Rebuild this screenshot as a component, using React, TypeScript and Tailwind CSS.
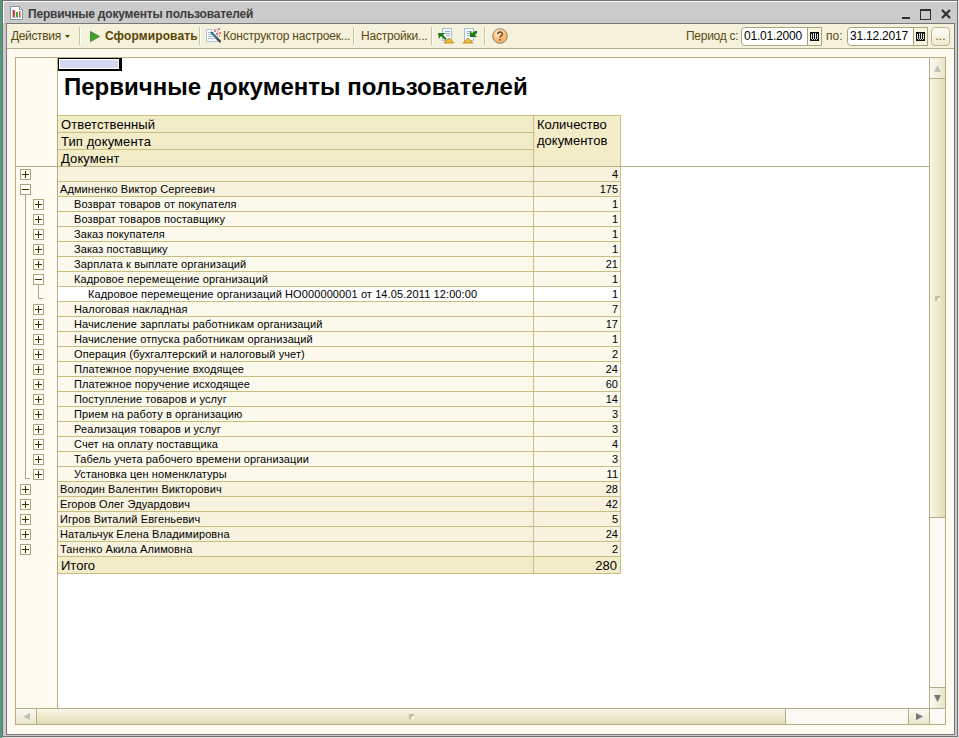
import type { ReactNode } from "react";

type Row = { text: string; count: number; level: 0 | 1 | 2; open?: boolean; track?: string };

const rows: Row[] = [
  { text: "", count: 4, level: 0 },
  { text: "Админенко Виктор Сергеевич", count: 175, level: 0, open: true },
  { text: "Возврат товаров от покупателя", count: 1, level: 1 },
  { text: "Возврат товаров поставщику", count: 1, level: 1 },
  { text: "Заказ покупателя", count: 1, level: 1 },
  { text: "Заказ поставщику", count: 1, level: 1 },
  { text: "Зарплата к выплате организаций", count: 21, level: 1 },
  { text: "Кадровое перемещение организаций", count: 1, level: 1, open: true },
  { text: "Кадровое перемещение организаций НО000000001 от 14.05.2011 12:00:00", count: 1, level: 2 },
  { text: "Налоговая накладная", count: 7, level: 1 },
  { text: "Начисление зарплаты работникам организаций", count: 17, level: 1 },
  { text: "Начисление отпуска работникам организаций", count: 1, level: 1 },
  { text: "Операция (бухгалтерский и налоговый учет)", count: 2, level: 1 },
  { text: "Платежное поручение входящее", count: 24, level: 1 },
  { text: "Платежное поручение исходящее", count: 60, level: 1 },
  { text: "Поступление товаров и услуг", count: 14, level: 1 },
  { text: "Прием на работу в организацию", count: 3, level: 1 },
  { text: "Реализация товаров и услуг", count: 3, level: 1 },
  { text: "Счет на оплату поставщика", count: 4, level: 1 },
  { text: "Табель учета рабочего времени организации", count: 3, level: 1 },
  { text: "Установка цен номенклатуры", count: 11, level: 1 },
  { text: "Володин Валентин Викторович", count: 28, level: 0 },
  { text: "Егоров Олег Эдуардович", count: 42, level: 0 },
  { text: "Игров Виталий Евгеньевич", count: 5, level: 0 },
  { text: "Натальчук Елена Владимировна", count: 24, level: 0 },
  { text: "Таненко Акила Алимовна", count: 2, level: 0 },
];

const rowBg = ["bg-[#f7f2dd]", "bg-[#fbf9ec]", "bg-white"];
const rowPad = ["pl-[2px]", "pl-4", "pl-[30px]"];

function Toggle({ open }: { open?: boolean }) {
  return (
    <svg width="11" height="11" className="block shrink-0" shapeRendering="crispEdges">
      <rect x="0.5" y="0.5" width="10" height="10" fill="#fffdf6" stroke="#aca67f" />
      <path d="M2 5.5h7" stroke="#3c3000" />
      {!open && <path d="M5.5 2v7" stroke="#3c3000" />}
    </svg>
  );
}

function GutterRow({ row, index }: { row: Row; index: number }) {
  const inGroup = index >= 2 && index <= 20;
  const last = index === 20;
  return (
    <div className="flex h-[15px]">
      <div className="flex w-[17px] pl-1 pt-[2px]">
        {row.level === 0 && (
          <div className="flex flex-col items-center">
            <Toggle open={row.open} />
            {row.open && <div className="h-[2px] w-px bg-[#aca67f]" />}
          </div>
        )}
        {inGroup && (
          <div className={`-mt-[2px] ml-[5px] w-[5px] border-l border-[#aca67f] ${last ? "h-[12px] border-b" : "h-[15px]"}`} />
        )}
      </div>
      <div className="flex w-[24px] pt-[2px]">
        {row.level === 1 && (
          <div className="flex flex-col items-center">
            <Toggle open={row.open} />
            {row.open && <div className="h-[2px] w-px bg-[#aca67f]" />}
          </div>
        )}
        {row.level === 2 && <div className="-mt-[2px] ml-[5px] h-[12px] w-[5px] border-b border-l border-[#aca67f]" />}
      </div>
    </div>
  );
}

function Sep() {
  return <div className="h-[18px] w-[2px] shrink-0 border-l border-[#c9c4a0] bg-white" />;
}

function Calendar() {
  return (
    <svg width="9" height="9" shapeRendering="crispEdges">
      <rect width="9" height="9" fill="#111" />
      <path d="M1 2.5h7M1 4.5h7M1 6.5h7" stroke="#fff" strokeDasharray="1 1" />
      <path d="M3 1.5h3M1 3.5h7M1 5.5h7M2 7.5h6" stroke="#fff" strokeDasharray="1 1" strokeOpacity="0.75" />
    </svg>
  );
}

function DateField({ children }: { children: ReactNode }) {
  return (
    <div className="flex h-[19px] w-[81px] shrink-0 rounded-l-[4px] border border-[#aca57c] bg-white text-black">
      <div className="flex w-[65px] items-center pl-[2px] text-[12px] tracking-[-0.22px]">{children}</div>
      <div className="flex flex-1 items-center justify-center border-l border-[#aca57c] bg-[#f8f5e4]">
        <Calendar />
      </div>
    </div>
  );
}

function PageIcon({ restore }: { restore?: boolean }) {
  return (
    <svg width="16" height="16" viewBox="0 0 16 16">
      <rect x={restore ? 2.5 : 4.5} y="0.5" width="9" height="12" fill="#f5faff" stroke="#a9bdcd" />
      <path d={restore ? "M5 3.5h5M5 5.5h5M5 7.5h4" : "M7 3.5h5M7 5.5h5M8 7.5h4"} stroke="#9bb0c0" />
      {restore ? (
        <path d="M15 3v2L13 7l2 2H8V3l2 2 3-2z" fill="#237a17" />
      ) : (
        <path d="M0 5h7L5 7l4 4-2 1-4-4-2 3z" fill="#237a17" />
      )}
      <path d={restore ? "M1 15l5-5 5 5z" : "M6 15l5-5 5 5z"} fill="#f2bd35" stroke="#b98516" strokeWidth="0.8" />
    </svg>
  );
}

function Grip() {
  return (
    <svg width="5" height="5" shapeRendering="crispEdges">
      <path d="M0 0h5v2H3v1H2v2H0z" fill="#c5c0a0" />
      <path d="M5 2v3H3V3h1V2z" fill="#fcfaec" />
    </svg>
  );
}

function Header() {
  return (
    <div className="flex h-[51px] w-[563px] border-t border-r border-[#c9bd80] bg-[#f3ecc8] text-[13px] text-black">
      <div className="w-[475px]">
        <div className="h-[17px] border-b border-[#c9bd80] pl-[3px] leading-[17px] tracking-[0.1px]">Ответственный</div>
        <div className="h-[17px] border-b border-[#c9bd80] pl-[3px] leading-[17px] tracking-[0.1px]">Тип документа</div>
        <div className="h-[16px] pl-[3px] leading-[17px] tracking-[0.1px]">Документ</div>
      </div>
      <div className="flex-1 border-l border-[#c9bd80] pl-[3px] pt-px leading-4">
        Количество
        <br />
        документов
      </div>
    </div>
  );
}

export default function App() {
  return (
    <div className="flex h-[738px] w-[959px] overflow-hidden bg-[#e9e7e2] font-['Liberation_Sans',Arial,sans-serif]">
      <div className="w-[2px] bg-[#4f9a78]" />
      <div className="flex h-[737px] w-[956px] flex-col border border-[#726f74] bg-[#cbcbcb]">
        <div className="flex h-[22px] shrink-0 items-center border-l border-t border-white bg-[#cbcbcb] pl-[6px] pr-[5px]">
          <svg width="13" height="14" viewBox="0 0 13 14" className="mt-px">
            <path d="M.5.5h9l3 3v10H.5z" fill="#fff" stroke="#8196a3" />
            <path d="M9.5.5v3h3" fill="#d5e2ea" stroke="#8196a3" />
            <path d="M2.5 3v8.5H11" stroke="#b5c5cf" fill="none" />
            <path d="M3 4h2v7H3z" fill="#e43d32" />
            <path d="M6 6h2v5H6z" fill="#38a64a" />
            <path d="M9 5h1.5v6H9z" fill="#e0503e" />
          </svg>
          <div className="ml-[5px] mt-[2px] whitespace-nowrap text-[12px] font-bold tracking-[-0.2px] text-[#3c3c3c]">
            Первичные документы пользователей
          </div>
          <svg width="54" height="12" className="ml-auto mt-1" fill="none" stroke="#303030" shapeRendering="crispEdges">
            <path d="M4 9h8" strokeWidth="2" />
            <path d="M22.5 1v9.500h10V1" />
            <path d="M22 1h11" strokeWidth="2" />
            <path d="M44 1l8 8M52 1l-8 8" strokeWidth="2.2" shapeRendering="auto" />
          </svg>
        </div>
        <div className="ml-[3px] mr-[2px] flex h-[712px] flex-col border border-[#77767a] bg-[#fffbf0]">
          <div className="flex h-[25px] shrink-0 items-center border-b border-[#b5ae85] bg-[#f4f1dc] text-[12px] whitespace-nowrap text-[#5a4a12]">
            <div className="ml-1 w-[50px] tracking-[-0.35px]">Действия</div>
            <svg width="5" height="3" className="ml-1 mr-[9px]">
              <path d="M0 0h5L2.500 3z" fill="#5a4400" />
            </svg>
            <Sep />
            <svg width="10" height="11" className="ml-[9px]">
              <path d="M.5.5v10l9-5z" fill="#3da526" stroke="#56863f" />
            </svg>
            <div className="ml-[5px] w-[94px] font-bold tracking-[0.1px] text-[#5a4400]">Сформировать</div>
            <Sep />
            <svg width="16" height="16" viewBox="0 0 16 16" className="ml-[5px]">
              <path d="M.5 1.500h11v12H.5z" fill="#f5faff" stroke="#b4c5d2" />
              <path d="M2 4.500h6M2 6.500h5M2 8.500h7M2 10.500h8" stroke="#afc1d0" />
              <path d="M5 4l9.500 10" stroke="#33698c" strokeWidth="2" />
              <path d="M11 10.500l3.500 3.500" stroke="#5d4636" strokeWidth="2" />
              <path d="M8 3h2M12 1h2M10 6h2M13 5h2M13 8h1" stroke="#ee4d42" strokeWidth="1.500" />
            </svg>
            <div className="ml-px w-[130px] tracking-[-0.2px]">Конструктор настроек...</div>
            <Sep />
            <div className="ml-[6px] w-[70px] tracking-[-0.2px]">Настройки...</div>
            <Sep />
            <div className="ml-[5px]"><PageIcon /></div>
            <div className="ml-2 mr-[6px]"><PageIcon restore /></div>
            <Sep />
            <svg width="16" height="16" viewBox="0 0 16 16" className="ml-[6px]">
              <defs>
                <radialGradient id="help" cx="0.4" cy="0.3">
                  <stop offset="0" stopColor="#fff2db" />
                  <stop offset="1" stopColor="#f4b66f" />
                </radialGradient>
              </defs>
              <circle cx="8" cy="8" r="7.300" fill="url(#help)" stroke="#9b8160" />
              <path d="M5.800 6.300c0-3 4.600-3 4.600-.3C10.400 7.700 8 7.700 8 9.700M8 11v1.500" stroke="#74441c" strokeWidth="1.500" fill="none" />
            </svg>
            <div className="ml-auto w-[55px] tracking-[-0.28px]">Период с:</div>
            <DateField>01.01.2000</DateField>
            <div className="ml-[4px] w-[21px]">по:</div>
            <DateField>31.12.2017</DateField>
            <div className="ml-[3px] mr-1 flex h-[19px] w-[19px] justify-center rounded-[4px] border border-[#bbb48b] bg-gradient-to-b from-[#fffef7] to-[#eeeacf] leading-[17px]">
              ...
            </div>
          </div>
          <div className="ml-2 mt-2 flex h-[668px] w-[931px] flex-col border border-[#b5ae85] bg-white">
            <div className="flex h-[650px]">
              <div className="w-[42px] shrink-0 border-r border-[#b5ae85] bg-[#fffbf0]">
                <div className="h-[109px] border-b border-[#b5ae85]" />
                {rows.map((row, i) => (
                  <GutterRow key={i} row={row} index={i} />
                ))}
              </div>
              <div className="w-[871px] text-black">
                <div className="h-[109px] border-b border-[#b5ae85]">
                  <div className="h-[13px] w-[64px] border-2 border-l border-t border-r-[3px] border-black bg-white p-px">
                    <div className="h-full bg-[#d3d9f0]" />
                  </div>
                  <div className="h-[44px] whitespace-nowrap pl-[6px] pt-px text-[24px] font-bold leading-[30px]">
                    Первичные документы пользователей
                  </div>
                  <Header />
                </div>
                <div className="w-[563px] border-r border-[#c9bd80] text-[11px]">
                  {rows.map((row, i) => (
                    <div key={i} className={`flex h-[15px] border-b border-[#c9bd80] leading-[15px] ${rowBg[row.level]}`}>
                      <div className={`w-[475px] whitespace-nowrap tracking-[0.1px] ${rowPad[row.level]}`}>{row.text}</div>
                      <div className="flex-1 border-l border-[#c9bd80] pr-[2px] text-right">{row.count}</div>
                    </div>
                  ))}
                  <div className="flex h-[17px] border-b border-[#c9bd80] bg-[#f3ecc8] text-[13px] leading-[17px]">
                    <div className="w-[475px] pl-[3px]">Итого</div>
                    <div className="flex-1 border-l border-[#c9bd80] pr-[3px] text-right">280</div>
                  </div>
                </div>
              </div>
              <div className="flex w-[16px] flex-col border-l border-[#b5ae85] bg-[#faf9f4]">
                <div className="flex h-[21px] items-center justify-center border-b border-[#b5ae85] bg-gradient-to-r from-[#fbfaf2] to-[#e9e5ca]">
                  <svg width="7" height="7"><path d="M0 7h7L3.500 0z" fill="#c5c2b5" /></svg>
                </div>
                <div className="flex h-[439px] items-center justify-center border-b border-[#b5ae85] bg-gradient-to-r from-[#f8f6e9] via-[#eeeacb] to-[#e0daba]">
                  <Grip />
                </div>
                <div className="mt-auto flex h-[21px] items-center justify-center border-t border-[#b5ae85] bg-gradient-to-r from-[#fbfaf2] to-[#e9e5ca]">
                  <svg width="7" height="7"><path d="M0 0h7L3.500 7z" fill="#77767a" /></svg>
                </div>
              </div>
            </div>
            <div className="flex h-[16px] border-t border-[#b5ae85] bg-[#faf9f4]">
              <div className="flex w-[21px] items-center justify-center border-r border-[#b5ae85] bg-gradient-to-b from-[#fbfaf2] to-[#e9e5ca]">
                <svg width="7" height="7"><path d="M7 0v7L0 3.500z" fill="#c5c2b5" /></svg>
              </div>
              <div className="flex w-[749px] items-center justify-center border-r border-[#b5ae85] bg-gradient-to-b from-[#f8f6e9] via-[#eeeacb] to-[#e0daba]">
                <Grip />
              </div>
              <div className="ml-auto flex w-[21px] items-center justify-center border-l border-[#b5ae85] bg-gradient-to-b from-[#fbfaf2] to-[#e9e5ca]">
                <svg width="7" height="7"><path d="M0 0v7L7 3.500z" fill="#77767a" /></svg>
              </div>
              <div className="w-[16px] border-l border-[#b5ae85]" />
            </div>
          </div>
        </div>
      </div>
    </div>
  );
}
